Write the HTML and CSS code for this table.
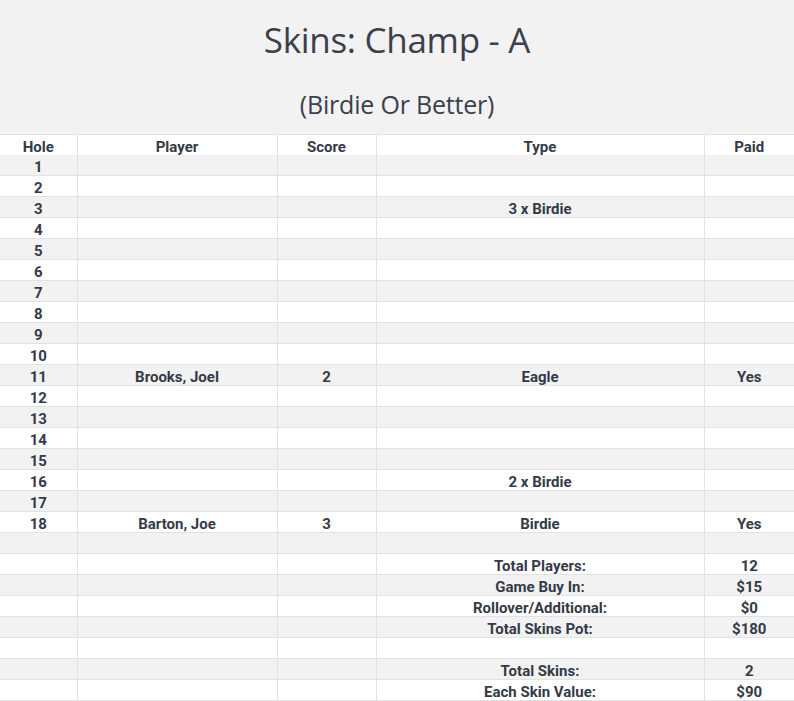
FILE: index.html
```html
<!DOCTYPE html>
<html>
<head>
<meta charset="utf-8">
<link rel="stylesheet" href="styles.css">
</head>
<body>
<header class="head">
  <h1 class="title">Skins: Champ - A</h1>
  <h2 class="subtitle">(Birdie Or Better)</h2>
</header>
<table class="grid">
  <colgroup>
    <col class="c-hole"><col class="c-player"><col class="c-score"><col class="c-type"><col class="c-paid">
  </colgroup>
  <thead>
    <tr><th>Hole</th><th>Player</th><th>Score</th><th>Type</th><th>Paid</th></tr>
  </thead>
  <tbody>
    <tr><td>1</td><td></td><td></td><td></td><td></td></tr>
    <tr><td>2</td><td></td><td></td><td></td><td></td></tr>
    <tr><td>3</td><td></td><td></td><td>3 x Birdie</td><td></td></tr>
    <tr><td>4</td><td></td><td></td><td></td><td></td></tr>
    <tr><td>5</td><td></td><td></td><td></td><td></td></tr>
    <tr><td>6</td><td></td><td></td><td></td><td></td></tr>
    <tr><td>7</td><td></td><td></td><td></td><td></td></tr>
    <tr><td>8</td><td></td><td></td><td></td><td></td></tr>
    <tr><td>9</td><td></td><td></td><td></td><td></td></tr>
    <tr><td>10</td><td></td><td></td><td></td><td></td></tr>
    <tr><td>11</td><td>Brooks, Joel</td><td>2</td><td>Eagle</td><td>Yes</td></tr>
    <tr><td>12</td><td></td><td></td><td></td><td></td></tr>
    <tr><td>13</td><td></td><td></td><td></td><td></td></tr>
    <tr><td>14</td><td></td><td></td><td></td><td></td></tr>
    <tr><td>15</td><td></td><td></td><td></td><td></td></tr>
    <tr><td>16</td><td></td><td></td><td>2 x Birdie</td><td></td></tr>
    <tr><td>17</td><td></td><td></td><td></td><td></td></tr>
    <tr><td>18</td><td>Barton, Joe</td><td>3</td><td>Birdie</td><td>Yes</td></tr>
    <tr><td></td><td></td><td></td><td></td><td></td></tr>
    <tr><td></td><td></td><td></td><td>Total Players:</td><td>12</td></tr>
    <tr><td></td><td></td><td></td><td>Game Buy In:</td><td>$15</td></tr>
    <tr><td></td><td></td><td></td><td>Rollover/Additional:</td><td>$0</td></tr>
    <tr><td></td><td></td><td></td><td>Total Skins Pot:</td><td>$180</td></tr>
    <tr><td></td><td></td><td></td><td></td><td></td></tr>
    <tr><td></td><td></td><td></td><td>Total Skins:</td><td>2</td></tr>
    <tr><td></td><td></td><td></td><td>Each Skin Value:</td><td>$90</td></tr>
  </tbody>
</table>
</body>
</html>
```
FILE: styles.css
```css
html, body {
  margin: 0;
  padding: 0;
  background: #ffffff;
}
body {
  color: #343a47;
  font-family: Roboto, "Liberation Sans", sans-serif;
}
.head {
  background: #f2f2f2;
  height: 134px;
  display: flex;
  flex-direction: column;
  align-items: center;
  border-bottom: 1px solid #e2e2e2;
}
.title {
  margin: 18px 0 0;
  font-family: "Open Sans", sans-serif;
  font-weight: 400;
  font-size: 35px;
  line-height: 44px;
  letter-spacing: -0.3px;
  color: #3a404c;
}
.subtitle {
  margin: 26px 0 0;
  font-family: "Open Sans", sans-serif;
  font-weight: 400;
  font-size: 25px;
  line-height: 32px;
  letter-spacing: -0.2px;
  color: #3a404c;
}
.grid {
  width: 794px;
  border-collapse: collapse;
  table-layout: fixed;
}
.c-hole { width: 77px; }
.c-player { width: 200px; }
.c-score { width: 99px; }
.c-type { width: 328px; }
.c-paid { width: 90px; }
.grid th, .grid td {
  height: 16px;
  padding: 4px 0 0;
  text-align: center;
  font-size: 15px;
  font-weight: 700;
  line-height: 16px;
  border-left: 1px solid #e2e2e2;
  border-bottom: 1px solid #e2e2e2;
  white-space: nowrap;
}
.grid th:first-child, .grid td:first-child {
  border-left: none;
}
.grid thead th {
  border-bottom: none;
  background: #ffffff;
}
.grid tbody tr:nth-child(odd) td {
  background: #f2f2f2;
}
.grid tbody tr:nth-child(even) td {
  background: #ffffff;
}
```
